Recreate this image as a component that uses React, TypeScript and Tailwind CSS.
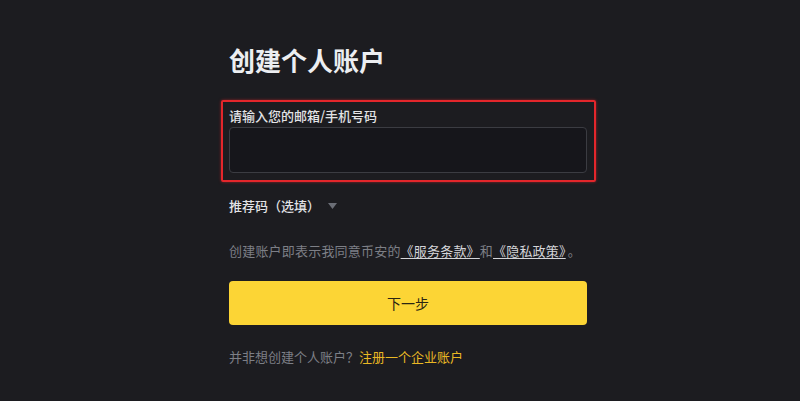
export default function App() {
  return (
    <div
      className="h-[401px] w-[800px] overflow-hidden bg-[#1c1c20]"
      style={{ fontFamily: '"Noto Sans CJK SC", "Noto Sans", sans-serif' }}
    >
      <div className="ml-[229px] w-[358px] pt-[43px]">
        {/* Title */}
        <h1 className="h-[34px] text-[26px] font-bold leading-[34px] text-[#eceef1]">创建个人账户</h1>

        {/* Email / phone field (highlighted) */}
        <div className="relative mt-[30px]">
          <div className="pointer-events-none absolute -left-[8px] -right-[9px] -top-[7px] -bottom-[9px] rounded-[2px] border-[2.5px] border-[#e3262b] shadow-[0_0_3px_rgba(227,38,43,0.6)]" />
          <label className="block h-[18px] text-[13px] font-medium leading-[18px] text-[#e2e3e6]">请输入您的邮箱/手机号码</label>
          <input
            className="mt-[2px] block h-[46px] w-full rounded-[4px] border border-[#3b3c42] bg-[#16161b] px-3 text-[14px] text-[#eaecef] outline-none"
            type="text"
          />
        </div>

        {/* Referral code */}
        <div className="mt-[24px] flex h-[18px] items-center">
          <span className="text-[13px] font-medium leading-[18px] text-[#e2e3e6]">推荐码（选填）</span>
          <svg className="ml-[8px]" width="9" height="6" viewBox="0 0 9 6">
            <path d="M0 0h9L4.5 6z" fill="#6b6e76" />
          </svg>
        </div>

        {/* Terms */}
        <p className="mt-[27px] h-[18px] whitespace-nowrap text-[13px] leading-[18px] tracking-[0.2px] text-[#7d7f86]">
          创建账户即表示我同意币安的
          <a className="text-[#d4d5d9] underline underline-offset-2">《服务条款》</a>
          和
          <a className="text-[#d4d5d9] underline underline-offset-2">《隐私政策》</a>
          <span className="ml-[2px]">。</span>
        </p>

        {/* Next button */}
        <button className="mt-[21px] flex h-[44px] w-full items-center justify-center rounded-[4px] bg-[#fcd535] text-[14px] text-[#2a2513]">
          下一步
        </button>

        {/* Business account */}
        <p className="mt-[23px] h-[18px] text-[13px] leading-[18px] text-[#7d7f86]">
          并非想创建个人账户？<a className="text-[#e9b824]">注册一个企业账户</a>
        </p>
      </div>
    </div>
  )
}
